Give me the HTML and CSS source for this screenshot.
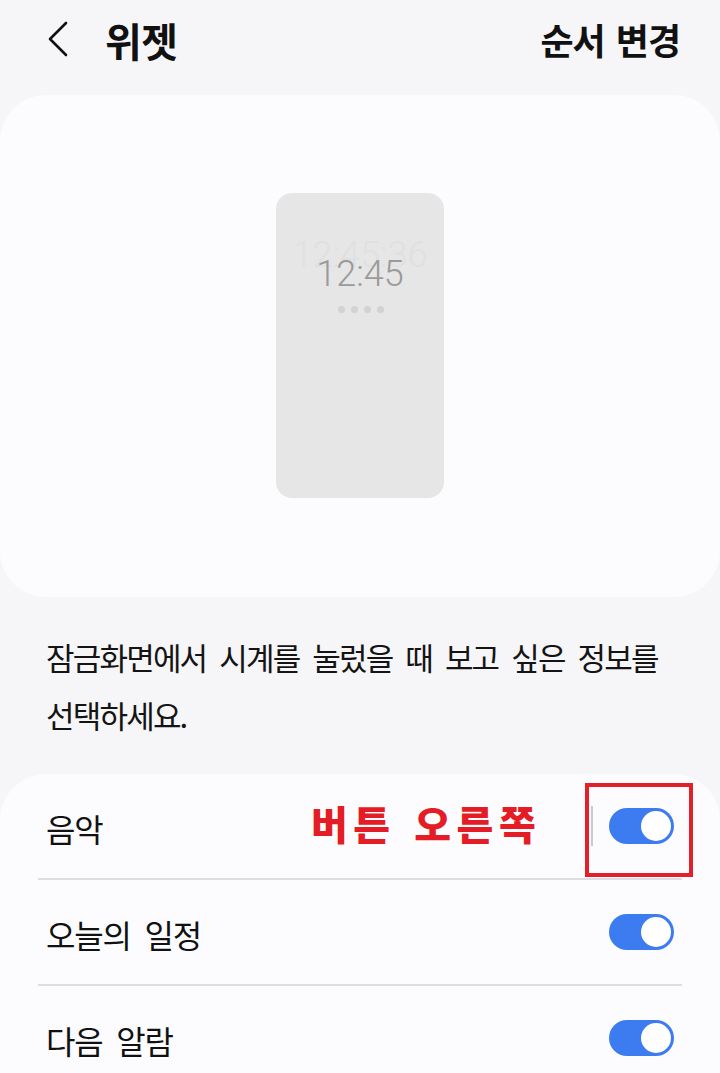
FILE: index.html
```html
<!DOCTYPE html>
<html lang="ko">
<head>
<meta charset="utf-8">
<link rel="stylesheet" href="styles.css">
</head>
<body>
<div class="page">
  <header class="topbar">
    <div class="left">
      <svg class="back" width="24" height="36" viewBox="0 0 24 36"><path d="M20 2 L4 18 L20 34" fill="none" stroke="#111" stroke-width="2.6" stroke-linecap="round" stroke-linejoin="round"/></svg>
      <h1 class="title">위젯</h1>
    </div>
    <div class="action">순서 변경</div>
  </header>

  <section class="preview">
    <div class="phone">
      <div class="clock-wrap">
        <div class="ghost">12:45:36</div>
        <div class="clock">12:45</div>
      </div>
      <div class="dots"><span></span><span></span><span></span><span></span></div>
    </div>
  </section>

  <p class="desc">잠금화면에서 시계를 눌렀을 때 보고 싶은 정보를<br>선택하세요.</p>

  <section class="list">
    <div class="row first">
      <span class="label">음악</span>
      <span class="note">버튼 오른쪽</span>
      <span class="vline"></span>
      <span class="toggle"><span class="knob"></span></span>
      <span class="redbox"></span>
    </div>
    <div class="divider"></div>
    <div class="row">
      <span class="label">오늘의 일정</span>
      <span class="toggle"><span class="knob"></span></span>
    </div>
    <div class="divider"></div>
    <div class="row">
      <span class="label">다음 알람</span>
      <span class="toggle"><span class="knob"></span></span>
    </div>
  </section>
</div>
</body>
</html>
```

FILE: styles.css
```css
html, body {
  margin: 0;
  padding: 0;
  background: #f6f6f8;
}
body {
  font-family: "Noto Sans CJK KR", "Noto Sans", sans-serif;
  color: #111;
  width: 720px;
  height: 1073px;
  overflow: hidden;
}
.page {
  width: 720px;
}
.topbar {
  height: 77px;
  display: flex;
  align-items: center;
  justify-content: space-between;
  padding: 0 40px 0 46px;
  box-sizing: border-box;
}
.left {
  display: flex;
  align-items: center;
}
.back {
  display: block;
  margin-right: 35px;
}
.title {
  margin: 0;
  font-size: 40px;
  font-weight: 700;
  letter-spacing: -0.5px;
  line-height: 1;
  position: relative;
  top: 1px;
}
.action {
  font-size: 36px;
  font-weight: 700;
  letter-spacing: -1px;
  word-spacing: 2px;
  line-height: 1;
}
.preview {
  margin-top: 18px;
  height: 502px;
  background: #fcfcfe;
  border-radius: 46px;
  display: flex;
  justify-content: center;
  padding-top: 98px;
  box-sizing: border-box;
}
.phone {
  width: 168px;
  height: 305px;
  background: #e6e6e6;
  border-radius: 16px;
  display: flex;
  flex-direction: column;
  align-items: center;
}
.clock-wrap {
  position: relative;
  margin-top: 44px;
  width: 168px;
  display: flex;
  flex-direction: column;
  align-items: center;
}
.ghost {
  font-family: Roboto, "Liberation Sans", sans-serif;
  font-weight: 300;
  font-size: 36px;
  line-height: 36px;
  color: #e0e0e0;
}
.clock {
  position: absolute;
  top: 19px;
  left: 0;
  right: 0;
  text-align: center;
  font-family: Roboto, "Liberation Sans", sans-serif;
  font-weight: 300;
  font-size: 36px;
  line-height: 36px;
  color: #9a9a9a;
}
.dots {
  display: flex;
  gap: 6px;
  margin-top: 33px;
  margin-left: 2px;
}
.dots span {
  width: 7px;
  height: 7px;
  border-radius: 50%;
  background: #d2d2d2;
}
.desc {
  margin: 31px 0 0;
  padding: 0 20px 0 46px;
  font-size: 31px;
  line-height: 58px;
  letter-spacing: -1.8px;
  word-spacing: 6px;
  color: #141414;
  white-space: nowrap;
}
.list {
  margin-top: 30px;
  background: #fcfcfe;
  border-radius: 46px 46px 0 0;
  padding: 0 38px;
}
.row {
  position: relative;
  height: 104px;
  display: flex;
  align-items: center;
  padding: 0 8px;
}
.label {
  font-size: 32px;
  letter-spacing: -1.2px;
  word-spacing: 6px;
  flex: 1;
  position: relative;
  top: 2px;
}
.note {
  position: absolute;
  left: 273px;
  top: 24px;
  font-size: 40px;
  font-weight: 900;
  color: #e31c25;
  letter-spacing: 5.5px;
  word-spacing: 2px;
  line-height: 50px;
}
.vline {
  width: 2px;
  height: 40px;
  background: #cacaca;
  margin-right: 16px;
}
.toggle {
  position: relative;
  width: 65px;
  height: 36px;
  border-radius: 18px;
  background: #3c7cf0;
  display: flex;
  align-items: center;
  justify-content: flex-end;
  padding-right: 3px;
  box-sizing: border-box;
}
.knob {
  width: 30px;
  height: 30px;
  border-radius: 50%;
  background: #fff;
}
.redbox {
  position: absolute;
  left: 547px;
  top: 9px;
  width: 108px;
  height: 94px;
  border: 4px solid #e3202a;
  box-sizing: border-box;
}
.divider {
  height: 2px;
  background: #dedee0;
}
```
